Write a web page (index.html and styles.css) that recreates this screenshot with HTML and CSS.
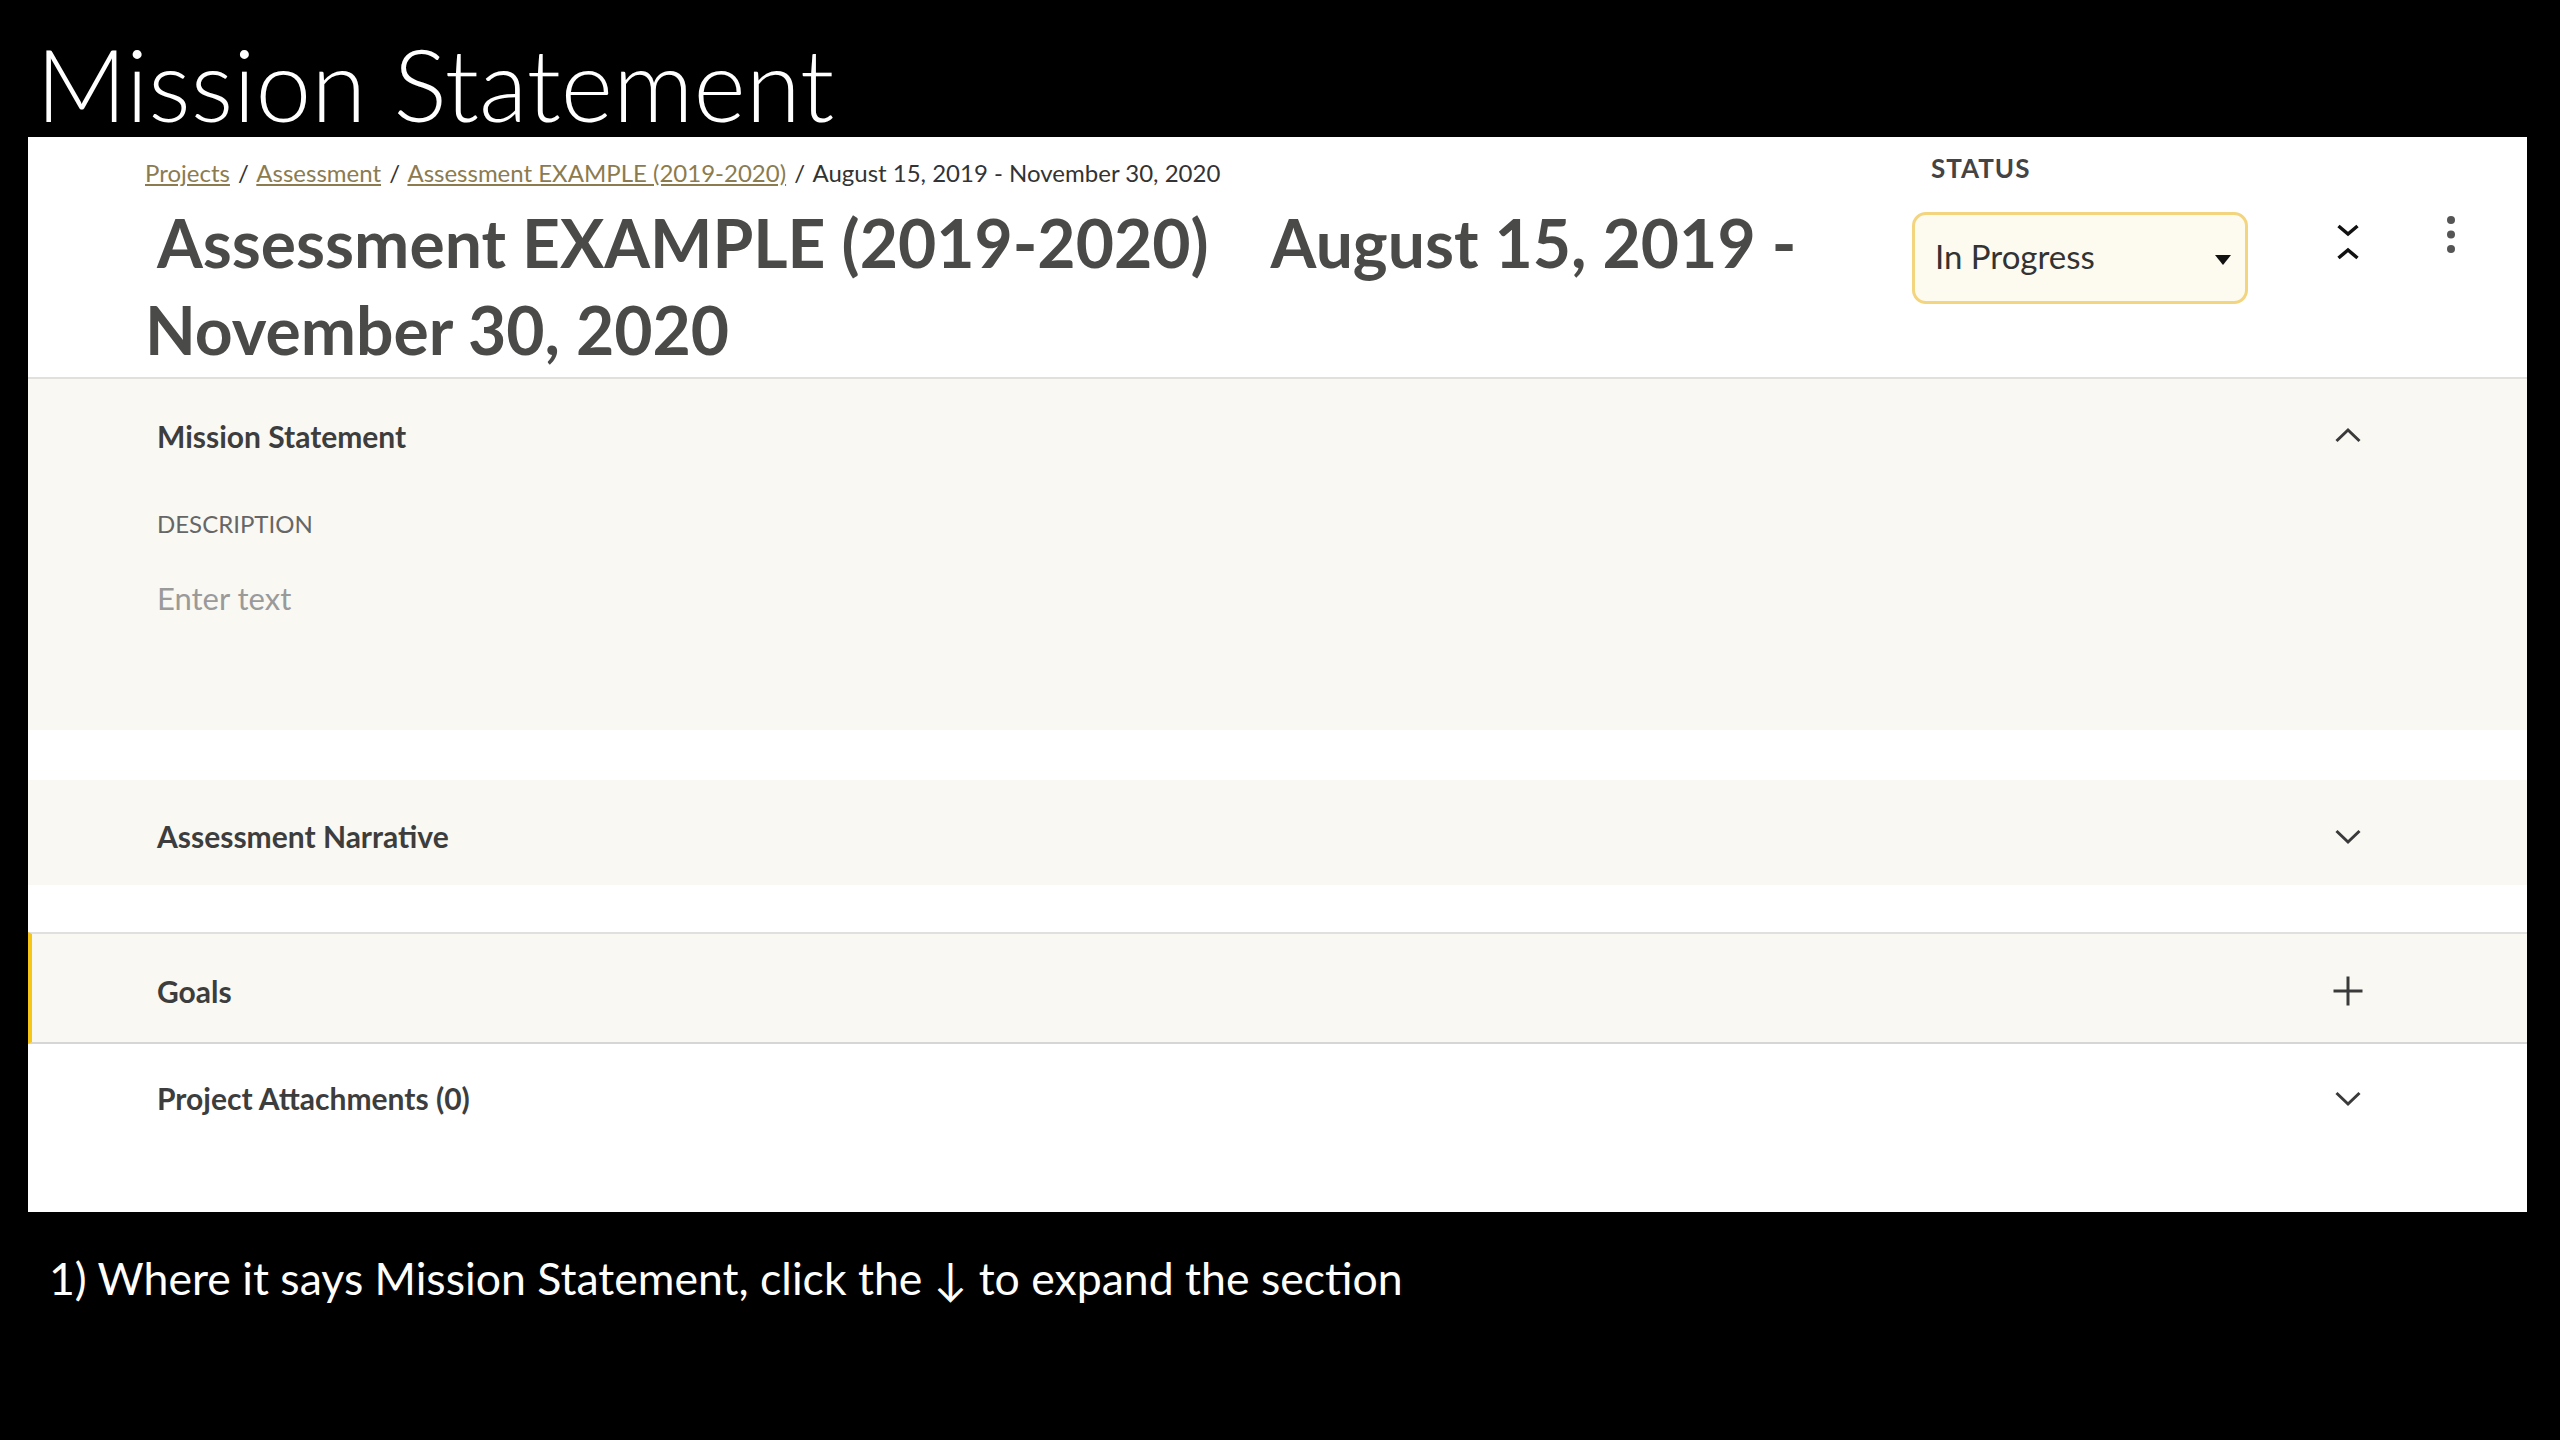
FILE: index.html
```html
<!DOCTYPE html>
<html lang="en">
<head>
    <meta charset="UTF-8">
    <meta name="viewport" content="width=device-width, initial-scale=1.0">
    <title>Mission Statement</title>
    <link rel="stylesheet" href="styles.css">
</head>
<body>
    <h1 class="slide-title">Mission Statement</h1>

    <div class="panel">
        <div class="header">
            <div class="header-main">
                <div class="breadcrumb">
                    <a href="#">Projects</a> <span class="sep">/</span>
                    <a href="#">Assessment</a> <span class="sep">/</span>
                    <a href="#">Assessment EXAMPLE (2019-2020)</a> <span class="sep">/</span>
                    <span>August 15, 2019 - November 30, 2020</span>
                </div>
                <h2 class="project-title">Assessment EXAMPLE (2019-2020)&nbsp;&nbsp;&nbsp; August 15, 2019 - November 30, 2020</h2>
            </div>
            <div class="status">
                <div class="status-label">STATUS</div>
                <div class="status-select">
                    <span>In Progress</span>
                    <span class="caret"></span>
                </div>
            </div>
            <button class="icon-btn collapse-all" title="Collapse all">
                <svg width="24" height="36" viewBox="0 0 24 36"><path d="M2.5 2 L12 10 L21.5 2 M2.5 34 L12 26 L21.5 34" fill="none" stroke="#111" stroke-width="3.5"/></svg>
            </button>
            <button class="icon-btn more" title="More">
                <svg width="10" height="40" viewBox="0 0 10 40"><circle cx="5" cy="5" r="4"/><circle cx="5" cy="19.5" r="4"/><circle cx="5" cy="34" r="4"/></svg>
            </button>
        </div>

        <div class="section open">
            <div class="section-head">
                <span class="section-title">Mission Statement</span>
                <svg class="chev" width="32" height="32" viewBox="0 0 32 32"><path d="M4.5 21 L16 10 L27.5 21" fill="none" stroke="#3a3a3a" stroke-width="3"/></svg>
            </div>
            <div class="section-body">
                <div class="field-label">DESCRIPTION</div>
                <div class="field-input">Enter text</div>
            </div>
        </div>

        <div class="section narrative">
            <div class="section-head">
                <span class="section-title">Assessment Narrative</span>
                <svg class="chev" width="32" height="32" viewBox="0 0 32 32"><path d="M4.5 11 L16 22 L27.5 11" fill="none" stroke="#3a3a3a" stroke-width="3"/></svg>
            </div>
        </div>

        <div class="section goals">
            <div class="section-head">
                <span class="section-title">Goals</span>
                <svg class="chev" width="32" height="32" viewBox="0 0 32 32"><path d="M16 1.5 V30.5 M1.5 16 H30.5" fill="none" stroke="#3a3a3a" stroke-width="3"/></svg>
            </div>
        </div>

        <div class="section attachments">
            <div class="section-head">
                <span class="section-title">Project Attachments (0)</span>
                <svg class="chev" width="32" height="32" viewBox="0 0 32 32"><path d="M4.5 11 L16 22 L27.5 11" fill="none" stroke="#3a3a3a" stroke-width="3"/></svg>
            </div>
        </div>
    </div>

    <p class="caption">1) Where it says Mission Statement, click the &#8595; to expand the section</p>
</body>
</html>
```

FILE: styles.css
```css
body {
    margin: 0;
    background: #000;
    font-family: Lato, "Open Sans", sans-serif;
    color: #3a3a3a;
}
.slide-title {
    margin: 0;
    height: 137px;
    box-sizing: border-box;
    padding: 30px 0 0 36px;
    font-size: 100px;
    line-height: 107px;
    font-weight: 300;
    color: #fff;
}
.panel {
    margin: 0 33px 0 28px;
    height: 1075px;
    background: #fff;
}
.header {
    display: flex;
    padding: 0 0 4px 117px;
    border-bottom: 2px solid #e2e0da;
}
.header-main {
    flex: 1;
}
.breadcrumb {
    margin-top: 21px;
    font-size: 24px;
    line-height: 30px;
    color: #333;
}
.breadcrumb a {
    color: #8c7b4f;
    text-decoration: underline;
}
.breadcrumb .sep {
    margin: 0 2px;
}
.project-title {
    margin: 11px 0 0 0;
    font-size: 66px;
    line-height: 87px;
    font-weight: 700;
    color: #4a4a48;
    text-indent: 12px;
}
.status {
    width: 336px;
    margin-top: 16px;
}
.status-label {
    padding-left: 19px;
    font-size: 26px;
    line-height: 30px;
    font-weight: 700;
    letter-spacing: 1px;
    color: #444;
}
.status-select {
    display: flex;
    align-items: center;
    justify-content: space-between;
    height: 92px;
    margin-top: 29px;
    box-sizing: border-box;
    padding: 0 14px 4px 20px;
    border: 3px solid #f3d47f;
    border-radius: 14px;
    background: #fdfbef;
    font-size: 33px;
    color: #333;
}
.caret {
    width: 0;
    height: 0;
    border-left: 8px solid transparent;
    border-right: 8px solid transparent;
    border-top: 10px solid #111;
    margin-top: 8px;
}
.icon-btn {
    padding: 0;
    border: none;
    background: none;
    display: flex;
    justify-content: center;
    align-self: flex-start;
}
.collapse-all {
    width: 40px;
    margin: 87px 0 0 80px;
}
.more {
    width: 40px;
    margin: 78px 56px 0 63px;
    fill: #555;
}
.section {
    background: #f9f8f3;
}
.section-head {
    display: flex;
    align-items: center;
    justify-content: space-between;
    height: 114px;
    padding: 0 163px 0 129px;
}
.section-title {
    font-size: 30px;
    font-weight: 700;
    color: #3d3d3d;
}
.section-body {
    padding: 16px 0 112px 129px;
}
.field-label {
    font-size: 24px;
    line-height: 30px;
    color: #666;
}
.field-input {
    margin-top: 39px;
    font-size: 31px;
    line-height: 40px;
    color: #9a9a9a;
}
.narrative {
    margin-top: 50px;
}
.narrative .section-head {
    height: 99px;
    padding-top: 6px;
}
.goals {
    margin-top: 47px;
    border-top: 2px solid #e0e0de;
    border-bottom: 2px solid #d6d6d4;
    border-left: 4px solid #f5c518;
}
.goals .section-head {
    height: 102px;
    padding-top: 6px;
    padding-left: 125px;
}
.attachments {
    background: #fff;
}
.attachments .section-head {
    height: 108px;
}
.caption {
    margin: 41px 0 0 49px;
    font-size: 44.6px;
    line-height: 50px;
    color: #fff;
}
```
